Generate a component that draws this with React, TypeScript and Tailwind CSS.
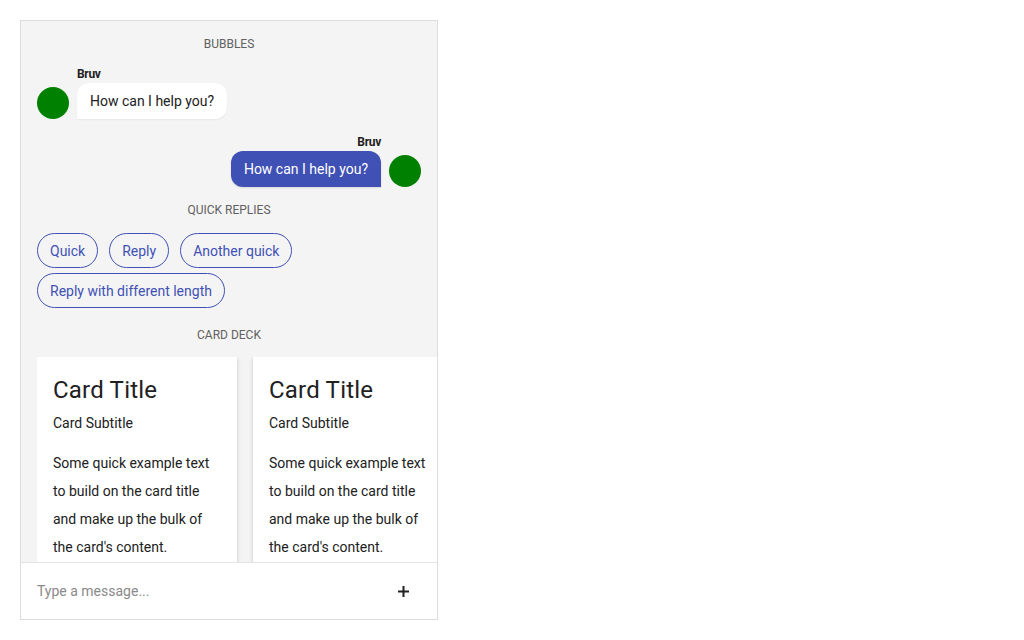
const FONT = { fontFamily: 'Roboto, "Noto Sans", sans-serif' };

const QUICK_REPLIES = ['Quick', 'Reply', 'Another quick', 'Reply with different length'];

function SectionLabel({ children }: { children: string }) {
  return <div className="text-center text-[12px] leading-[14px] uppercase text-[#616161]">{children}</div>;
}

function Avatar() {
  return <div className="w-8 h-8 rounded-full bg-[#008000] flex-shrink-0" />;
}

function Bubble({ mine }: { mine?: boolean }) {
  return (
    <div className={`flex items-end gap-2 ${mine ? 'justify-end' : ''}`}>
      {!mine && <Avatar />}
      <div className={`flex flex-col ${mine ? 'items-end' : 'items-start'}`}>
        <div className="text-[12px] leading-[17px] font-bold text-[#212121] tracking-[-0.3px]">Bruv</div>
        <div
          className={`h-9 flex items-center px-[13px] text-[14px] rounded-xl ${
            mine
              ? 'bg-[#3f51b5] text-white rounded-br-none shadow-[0_1px_2px_rgba(0,0,0,0.12)]'
              : 'bg-white text-[#212121] rounded-bl-none shadow-[0_1px_2px_rgba(0,0,0,0.06)]'
          }`}
        >
          How can I help you?
        </div>
      </div>
      {mine && <Avatar />}
    </div>
  );
}

function Card() {
  return (
    <div className="w-[200px] flex-shrink-0 bg-white shadow-[0_1px_4px_rgba(0,0,0,0.18)] p-4 text-[#212121]">
      <div className="text-[24px] leading-8 tracking-[0.2px] mt-px">Card Title</div>
      <div className="text-[14px] leading-5 mt-[7px]">Card Subtitle</div>
      <p className="text-[14px] leading-7 mt-4">
        Some quick example text to build on the card title and make up the bulk of the card's content.
      </p>
    </div>
  );
}

export default function App() {
  return (
    <div className="w-full h-[640px] bg-white p-5" style={FONT}>
      <div className="w-[418px] h-[600px] border border-[#dddddd] bg-[#f4f4f4] flex flex-col overflow-hidden">
        <div className="flex-1 overflow-hidden pt-4 pl-4">
          <div className="pr-4">
            <SectionLabel>Bubbles</SectionLabel>
            <div className="mt-[15px]">
              <Bubble />
            </div>
            <div className="mt-[15px]">
              <Bubble mine />
            </div>
            <div className="mt-4">
              <SectionLabel>Quick replies</SectionLabel>
            </div>
            <div className="mt-4 flex flex-wrap gap-x-[11px] gap-y-[5px]">
              {QUICK_REPLIES.map((q) => (
                <button
                  key={q}
                  className="h-[35px] px-3 rounded-full border border-[#3f51b5] text-[#3f51b5] text-[14px] leading-none"
                >
                  {q}
                </button>
              ))}
            </div>
            <div className="mt-5">
              <SectionLabel>Card deck</SectionLabel>
            </div>
          </div>
          <div className="mt-[15px] flex gap-4 overflow-hidden">
            <Card />
            <Card />
            <Card />
          </div>
        </div>
        <div className="h-[57px] flex-shrink-0 bg-white border-t border-[#e4e4e4] flex items-center pl-4 pr-[28px]">
          <div className="flex-1 text-[14px] text-[#8a8a8a]">Type a message...</div>
          <svg width="11" height="11" viewBox="0 0 11 11" className="text-[#212121]">
            <path d="M5.5 0v11M0 5.5h11" stroke="currentColor" strokeWidth="2" />
          </svg>
        </div>
      </div>
    </div>
  );
}
